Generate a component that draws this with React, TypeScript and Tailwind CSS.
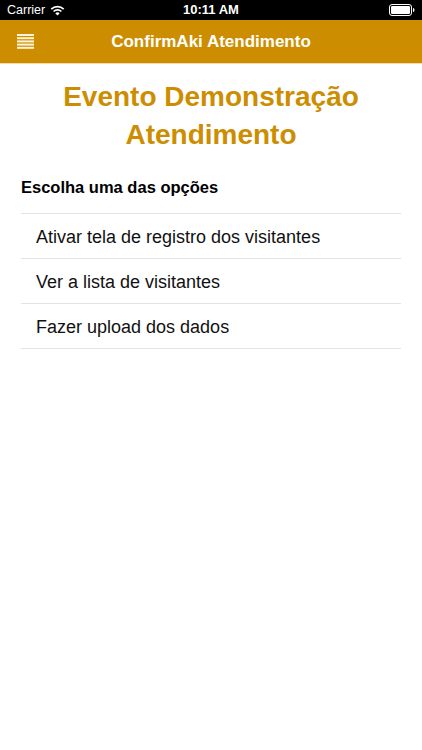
import React from "react";

const font = { fontFamily: '"Liberation Sans", Arial, sans-serif' };

function Wifi() {
  return (
    <svg width="15" height="11" viewBox="0 0 15 11">
      <path d="M7.5 10.5 L5.3 8.2 A3.2 3.2 0 0 1 9.7 8.2 Z" fill="#fff" />
      <path d="M3.6 6.5 A5.6 5.6 0 0 1 11.4 6.5" stroke="#fff" strokeWidth="1.7" fill="none" />
      <path d="M1.3 4.2 A8.8 8.8 0 0 1 13.7 4.2" stroke="#fff" strokeWidth="1.7" fill="none" />
    </svg>
  );
}

function Battery() {
  return (
    <svg width="26" height="12" viewBox="0 0 26 12">
      <rect x="0.5" y="0.5" width="22" height="11" rx="2.5" stroke="#fff" strokeWidth="1" fill="none" />
      <rect x="2" y="2" width="19" height="8" rx="1.2" fill="#fff" />
      <path d="M24 4 Q25.5 4 25.5 6 Q25.5 8 24 8 Z" fill="#fff" />
    </svg>
  );
}

function Menu() {
  return (
    <svg width="17" height="15" viewBox="0 0 17 15">
      {[0, 3.2, 6.4, 9.6, 12.8].map((y) => (
        <rect key={y} x="0" y={y} width="17" height="2" fill="#fff4d8" />
      ))}
    </svg>
  );
}

export default function App() {
  const items = [
    "Ativar tela de registro dos visitantes",
    "Ver a lista de visitantes",
    "Fazer upload dos dados",
  ];
  return (
    <div className="w-[422px] h-[750px] bg-white" style={font}>
      <div className="h-[20px] bg-black flex items-center px-[7px] text-white relative">
        <div className="flex items-center gap-[5px] text-[12.5px]">
          <span>Carrier</span>
          <Wifi />
        </div>
        <div className="absolute left-0 right-0 text-center text-[13px] font-semibold">10:11 AM</div>
        <div className="ml-auto">
          <Battery />
        </div>
      </div>
      <div className="h-[44px] bg-[#cc8e00] flex items-center relative border-b border-[#f1dca6]">
        <div className="pl-[17px] flex items-center">
          <Menu />
        </div>
        <div className="absolute left-0 right-0 text-center text-white font-bold text-[17px]">
          ConfirmAki Atendimento
        </div>
      </div>
      <div className="pt-[14px] text-center text-[#cc8e00] font-bold text-[28px] leading-[38px]">
        Evento Demonstração
        <br />
        Atendimento
      </div>
      <div className="px-[21px]">
        <div className="pt-[22px] pb-[15px] text-[16.5px] font-bold text-black leading-[22px]">
          Escolha uma das opções
        </div>
        <div className="border-t border-[#e3e3e3]">
          {items.map((t) => (
            <div
              key={t}
              className="h-[45px] border-b border-[#e3e3e3] flex items-center pl-[15px] pt-[3px] text-[18px] text-[#111]"
            >
              {t}
            </div>
          ))}
        </div>
      </div>
    </div>
  );
}
